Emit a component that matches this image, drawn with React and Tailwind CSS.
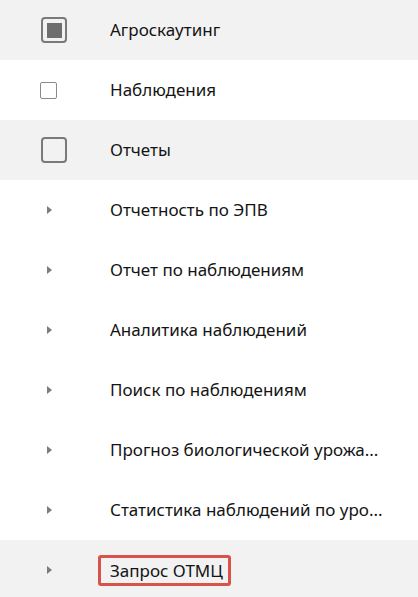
import React from 'react';

const topItems = [
  { label: 'Агроскаутинг', box: 'mixed', bg: 'bg-[#f2f2f2]' },
  { label: 'Наблюдения', box: 'small', bg: 'bg-white' },
  { label: 'Отчеты', box: 'large', bg: 'bg-[#f2f2f2]' },
];

// shown as clipped in the source list
const reports = [
  'Отчетность по ЭПВ',
  'Отчет по наблюдениям',
  'Аналитика наблюдений',
  'Поиск по наблюдениям',
  'Прогноз биологической урожа...',
  'Статистика наблюдений по уро...',
];

const CheckBox = ({ kind }) => {
  if (kind === 'small') {
    return <div className="ml-[40px] w-[17px] h-[17px] rounded-[2px] border border-[#8a8a8a] bg-white"></div>;
  }
  return (
    <div className="ml-[41px] w-[26px] h-[26px] rounded-[4px] border-2 border-[#7a7a7a] flex items-center justify-center">
      {kind === 'mixed' && <div className="w-[15px] h-[15px] bg-[#6e6e6e]"></div>}
    </div>
  );
};

const Caret = () => (
  <svg width="5" height="8" viewBox="0 0 5 8" className="ml-[47px] shrink-0">
    <path d="M0 0 L5 4 L0 8 Z" fill="#7c7c7c" />
  </svg>
);

export default function App() {
  return (
    <div className="w-[418px] h-[597px] overflow-hidden bg-white text-[17px] text-[#141414] font-['Noto_Sans',sans-serif]">
      {topItems.map((it) => (
        <div key={it.label} className={`flex items-center h-[60px] ${it.bg}`}>
          <div className="w-[110px] flex items-center">
            <CheckBox kind={it.box} />
          </div>
          <span>{it.label}</span>
        </div>
      ))}
      {reports.map((r) => (
        <div key={r} className="flex items-center h-[60px]">
          <div className="w-[110px] flex items-center">
            <Caret />
          </div>
          <span className="whitespace-nowrap">{r}</span>
        </div>
      ))}
      <div className="flex items-center h-[60px] bg-[#f2f2f2]">
        <div className="w-[110px] flex items-center">
          <Caret />
        </div>
        <span className="-ml-[12px] pl-[9px] pr-[5px] leading-[25px] border-[3px] border-[#d9534a] rounded-[3px]">
          Запрос ОТМЦ
        </span>
      </div>
    </div>
  );
}
